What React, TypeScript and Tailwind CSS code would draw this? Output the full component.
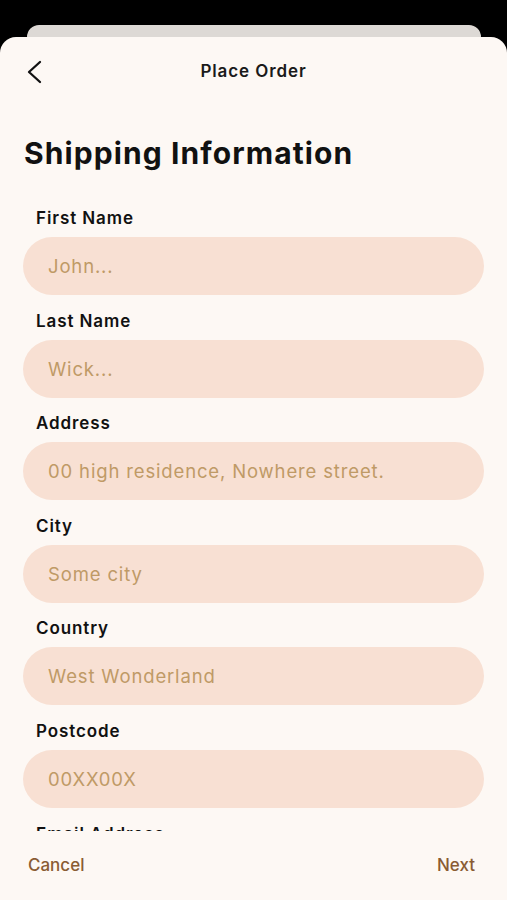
import { useState } from "react";

const fields = [
  { label: "First Name", placeholder: "John..." },
  { label: "Last Name", placeholder: "Wick..." },
  { label: "Address", placeholder: "00 high residence, Nowhere street." },
  { label: "City", placeholder: "Some city" },
  { label: "Country", placeholder: "West Wonderland" },
  { label: "Postcode", placeholder: "00XX00X" },
  { label: "Email Address", placeholder: "john@wick.com" },
  { label: "Phone", placeholder: "+00 000 000 000" },
];

const BackChevron = () => (
  <svg width="17" height="24" viewBox="0 0 17 24" fill="none">
    <path
      d="M14 2 L3 12 L14 22"
      stroke="#111"
      strokeWidth="2.3"
      strokeLinecap="round"
      strokeLinejoin="round"
    />
  </svg>
);

export default function App() {
  const [values, setValues] = useState<Record<string, string>>({});

  return (
    <div
      className="h-[900px] w-full bg-black flex flex-col overflow-hidden"
      style={{ fontFamily: "Inter, 'Noto Sans', sans-serif" }}
    >
      <div className="mt-[25px] ml-[27px] mr-[26px] h-[12px] shrink-0 rounded-t-[12px] bg-[#DDD9D5]" />

      <div className="flex-1 min-h-0 flex flex-col rounded-t-[16px] bg-[#FDF8F4]">
        <div className="h-[70px] shrink-0 grid grid-cols-[1fr_auto_1fr] items-center px-[26px]">
          <button className="justify-self-start">
            <BackChevron />
          </button>
          <h2 className="text-[17px] font-semibold text-[#1a1a1a] tracking-[0.9px]">
            Place Order
          </h2>
          <div />
        </div>

        <div className="flex-1 min-h-0 overflow-hidden px-[23px]">
          <h1 className="mt-[28px] mb-[36px] pl-[1px] text-[30px] leading-[36px] font-bold text-[#111] tracking-[1.1px]">
            Shipping Information
          </h1>

          <div className="flex flex-col gap-[14.6px]">
            {fields.map((f) => (
              <div key={f.label} className="flex flex-col">
                <label className="pl-[13px] mb-[8px] text-[17px] leading-[22px] font-semibold text-[#111] tracking-[0.9px]">
                  {f.label}
                </label>
                <input
                  value={values[f.label] ?? ""}
                  onChange={(e) =>
                    setValues({ ...values, [f.label]: e.target.value })
                  }
                  placeholder={f.placeholder}
                  className="h-[58px] w-full rounded-full bg-[#F8E0D3] px-[25px] text-[18.5px] tracking-[0.85px] text-[#3a2a1a] placeholder:text-[#BF9A66] outline-none"
                />
              </div>
            ))}
          </div>
        </div>

        <div className="h-[69px] shrink-0 flex items-center justify-between pl-[28px] pr-[32px]">
          <button className="text-[17px] font-medium text-[#8A5C33]">
            Cancel
          </button>
          <button className="text-[17px] font-medium text-[#8A5C33]">
            Next
          </button>
        </div>
      </div>
    </div>
  );
}
